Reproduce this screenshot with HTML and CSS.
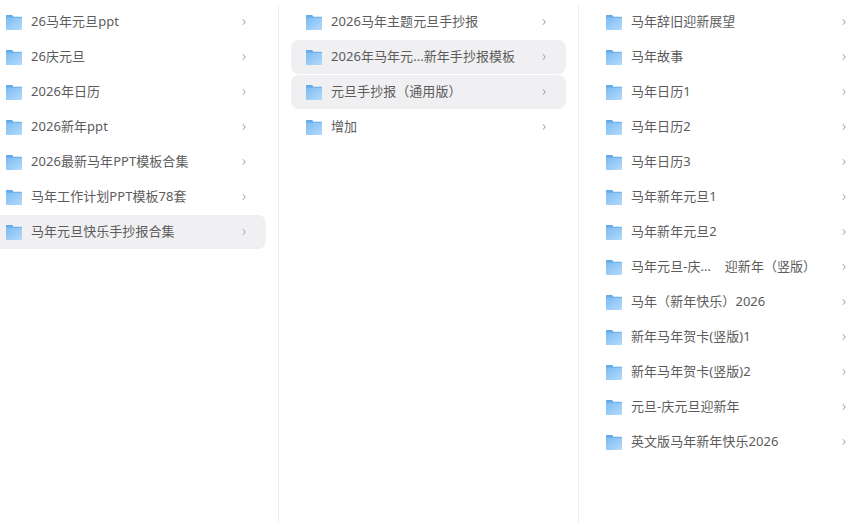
FILE: index.html
```html
<!DOCTYPE html>
<html lang="zh-CN">
<head>
    <meta charset="UTF-8">
    <meta name="viewport" content="width=device-width, initial-scale=1.0">
    <title>文件夹列表</title>
    <link rel="stylesheet" href="styles.css">
</head>
<body>

    <svg class="sprite" width="0" height="0" aria-hidden="true">
        <defs>
            <linearGradient id="folderBack" x1="0" y1="0" x2="0" y2="1">
                <stop offset="0" stop-color="#5fa8e8"/>
                <stop offset="1" stop-color="#6fb3ee"/>
            </linearGradient>
            <linearGradient id="folderFront" x1="0" y1="0" x2="1" y2="1">
                <stop offset="0" stop-color="#7dbcf3"/>
                <stop offset="1" stop-color="#b4dafb"/>
            </linearGradient>
            <symbol id="folder" viewBox="0 0 16 15">
                <path d="M0 .8C0 .3.3 0 .8 0h5c.3 0 .5.1.7.4L7.500 1.800H15.200c.5 0 .8.3.8.8V5H0z" fill="url(#folderBack)"/>
                <path d="M0 2.800h16v11.500c0 .4-.3.7-.7.7H.7c-.4 0-.7-.3-.7-.7z" fill="url(#folderFront)"/>
            </symbol>
            <symbol id="chevron" viewBox="0 0 6 8">
                <path d="M2 1.300l2.200 2.700L2 6.700" fill="none" stroke="#999" stroke-width="1"/>
            </symbol>
        </defs>
    </svg>

    <div class="columns">

        <!-- first level -->
        <div class="column">
            <div class="item"><svg class="folder"><use href="#folder"/></svg><span class="name">26马年元旦ppt</span><svg class="arrow"><use href="#chevron"/></svg></div>
            <div class="item"><svg class="folder"><use href="#folder"/></svg><span class="name">26庆元旦</span><svg class="arrow"><use href="#chevron"/></svg></div>
            <div class="item"><svg class="folder"><use href="#folder"/></svg><span class="name">2026年日历</span><svg class="arrow"><use href="#chevron"/></svg></div>
            <div class="item"><svg class="folder"><use href="#folder"/></svg><span class="name">2026新年ppt</span><svg class="arrow"><use href="#chevron"/></svg></div>
            <div class="item"><svg class="folder"><use href="#folder"/></svg><span class="name">2026最新马年PPT模板合集</span><svg class="arrow"><use href="#chevron"/></svg></div>
            <div class="item"><svg class="folder"><use href="#folder"/></svg><span class="name">马年工作计划PPT模板78套</span><svg class="arrow"><use href="#chevron"/></svg></div>
            <div class="item active"><svg class="folder"><use href="#folder"/></svg><span class="name">马年元旦快乐手抄报合集</span><svg class="arrow"><use href="#chevron"/></svg></div>
        </div>

        <!-- second level -->
        <div class="column">
            <div class="item"><svg class="folder"><use href="#folder"/></svg><span class="name">2026马年主题元旦手抄报</span><svg class="arrow"><use href="#chevron"/></svg></div>
            <div class="item active"><svg class="folder"><use href="#folder"/></svg><span class="name">2026年马年元...新年手抄报模板</span><svg class="arrow"><use href="#chevron"/></svg></div>
            <div class="item active"><svg class="folder"><use href="#folder"/></svg><span class="name">元旦手抄报（通用版）</span><svg class="arrow"><use href="#chevron"/></svg></div>
            <div class="item"><svg class="folder"><use href="#folder"/></svg><span class="name">增加</span><svg class="arrow"><use href="#chevron"/></svg></div>
        </div>

        <!-- third level -->
        <div class="column">
            <div class="item"><svg class="folder"><use href="#folder"/></svg><span class="name">马年辞旧迎新展望</span><svg class="arrow"><use href="#chevron"/></svg></div>
            <div class="item"><svg class="folder"><use href="#folder"/></svg><span class="name">马年故事</span><svg class="arrow"><use href="#chevron"/></svg></div>
            <div class="item"><svg class="folder"><use href="#folder"/></svg><span class="name">马年日历1</span><svg class="arrow"><use href="#chevron"/></svg></div>
            <div class="item"><svg class="folder"><use href="#folder"/></svg><span class="name">马年日历2</span><svg class="arrow"><use href="#chevron"/></svg></div>
            <div class="item"><svg class="folder"><use href="#folder"/></svg><span class="name">马年日历3</span><svg class="arrow"><use href="#chevron"/></svg></div>
            <div class="item"><svg class="folder"><use href="#folder"/></svg><span class="name">马年新年元旦1</span><svg class="arrow"><use href="#chevron"/></svg></div>
            <div class="item"><svg class="folder"><use href="#folder"/></svg><span class="name">马年新年元旦2</span><svg class="arrow"><use href="#chevron"/></svg></div>
            <div class="item"><svg class="folder"><use href="#folder"/></svg><span class="name">马年元旦-庆...&nbsp;&nbsp;&nbsp;&nbsp;迎新年（竖版）</span><svg class="arrow"><use href="#chevron"/></svg></div>
            <div class="item"><svg class="folder"><use href="#folder"/></svg><span class="name">马年（新年快乐）2026</span><svg class="arrow"><use href="#chevron"/></svg></div>
            <div class="item"><svg class="folder"><use href="#folder"/></svg><span class="name">新年马年贺卡(竖版)1</span><svg class="arrow"><use href="#chevron"/></svg></div>
            <div class="item"><svg class="folder"><use href="#folder"/></svg><span class="name">新年马年贺卡(竖版)2</span><svg class="arrow"><use href="#chevron"/></svg></div>
            <div class="item"><svg class="folder"><use href="#folder"/></svg><span class="name">元旦-庆元旦迎新年</span><svg class="arrow"><use href="#chevron"/></svg></div>
            <div class="item"><svg class="folder"><use href="#folder"/></svg><span class="name">英文版马年新年快乐2026</span><svg class="arrow"><use href="#chevron"/></svg></div>
        </div>

    </div>

</body>
</html>
```

FILE: styles.css
```css
html, body {
    height: 100%;
}

body {
    font-family: "Noto Sans", "Noto Sans CJK SC", sans-serif;
    background-color: #fff;
    margin: 0;
    padding: 0;
    overflow: hidden;
}

.sprite {
    display: block;
}

.columns {
    display: flex;
    height: 100%;
    margin-left: -21px;
}

.column {
    flex: 0 0 300px;
    box-sizing: border-box;
    display: flex;
    flex-direction: column;
    gap: 1px;
    margin-top: 5px;
    padding: 0 12px;
    border-right: 1px solid #eeeef0;
}

.item {
    display: flex;
    align-items: center;
    height: 34px;
    padding-left: 15px;
    padding-right: 19px;
    border-radius: 8px;
    color: #5c5c5c;
    font-size: 13px;
    letter-spacing: 0.05px;
}

.item.active {
    background-color: #f0f0f2;
}

.folder {
    flex: none;
    width: 16px;
    height: 15px;
    margin: 1px 9px 0 0;
}

.name {
    flex: 1;
    line-height: 18px;
    margin-bottom: 2px;
    white-space: nowrap;
    overflow: hidden;
}

.arrow {
    flex: none;
    width: 6px;
    height: 8px;
}
```
